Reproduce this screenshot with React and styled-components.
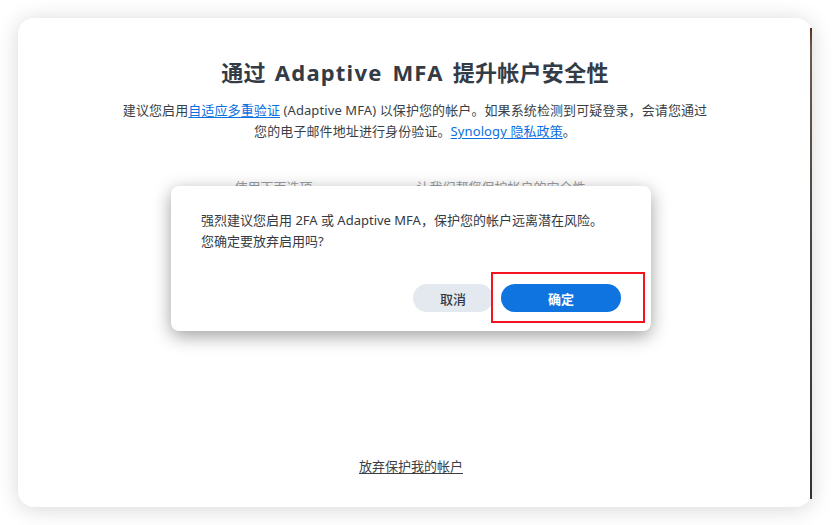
import React from 'react';
import styled, { createGlobalStyle } from 'styled-components';

const GlobalStyle = createGlobalStyle`
    html, body {
        margin: 0;
        padding: 0;
        background: #ffffff;
    }
    body {
        font-family: "Noto Sans", "Noto Sans CJK SC", sans-serif;
        color: #333a44;
    }
`

const Page = styled.div`
    width: 832px;
    height: 525px;
    padding: 18px 20px 18px 18px;
    box-sizing: border-box;
`

const Window = styled.div`
    position: relative;
    height: 489px;
    background: #ffffff;
    border-radius: 16px;
    box-shadow: 0 2px 22px rgba(0, 0, 0, 0.16);
    display: flex;
    flex-direction: column;
    align-items: center;
    padding-top: 39px;
    box-sizing: border-box;
    /* sliver of the desktop behind the window, right edge */
    &::after {
        content: '';
        position: absolute;
        right: 0;
        top: 10px;
        bottom: 8px;
        width: 2px;
        background: linear-gradient(#5a2a1c 0%, #6e5a4e 4%, #4a4844 40%, #2f3236 100%);
    }
`

const Title = styled.h1`
    margin: 0;
    font-size: 22px;
    line-height: 30px;
    font-weight: 700;
    letter-spacing: 0.3px;
    word-spacing: 3px;
    color: #333b45;
`

const Latin = styled.span`
    letter-spacing: 1.2px;
`

const Desc = styled.p`
    margin: 13px 0 0;
    font-size: 13px;
    line-height: 21px;
    letter-spacing: 0.1px;
    text-align: center;
    color: #3a3f47;
`

const Link = styled.a`
    color: #0a6fe0;
    text-decoration: underline;
    text-underline-offset: 2px;
`

const Hint = styled.p`
    margin: 35px 0 0 -10px;
    font-size: 13px;
    line-height: 21px;
    color: #9a9ea4;
    white-space: pre;
`

const Spacer = styled.div`
    flex: 1;
`

const GiveUp = styled.a`
    margin: 0 8px 30px 0;
    font-size: 13px;
    line-height: 21px;
    color: #3a3f47;
    text-decoration: underline;
    text-underline-offset: 2px;
`

const Dialog = styled.div`
    position: absolute;
    left: 153px;
    top: 168px;
    width: 480px;
    height: 145px;
    box-sizing: border-box;
    background: #ffffff;
    border-radius: 8px;
    box-shadow: 0 5px 18px rgba(0, 0, 0, 0.38);
    padding: 24px 30px 19px 30px;
    display: flex;
    flex-direction: column;
`

const DialogText = styled.p`
    margin: 0;
    font-size: 13px;
    line-height: 21px;
    color: #343a42;
`

const Actions = styled.div`
    margin-top: auto;
    display: flex;
    justify-content: flex-end;
    gap: 8px;
    position: relative;
`

const Button = styled.button`
    height: 28px;
    width: ${props => props.w}px;
    border: none;
    border-radius: 14px;
    font-family: "Noto Sans", "Noto Sans CJK SC", sans-serif;
    font-size: 13px;
    font-weight: ${props => props.primary ? 700 : 500};
    color: ${props => props.primary ? '#ffffff' : '#333a44'};
    background: ${props => props.primary ? '#0f74e0' : '#e4e9f0'};
    cursor: pointer;
`

const Highlight = styled.div`
    position: absolute;
    right: -24px;
    top: -12px;
    width: 154px;
    height: 51px;
    box-sizing: border-box;
    border: 2px solid #f5141e;
    pointer-events: none;
`

const App = () => {
    return (
        <Page>
            <GlobalStyle />
            <Window>
                <Title>通过 <Latin>Adaptive MFA</Latin> 提升帐户安全性</Title>
                <Desc>
                    建议您启用<Link>自适应多重验证</Link> (Adaptive MFA) 以保护您的帐户。如果系统检测到可疑登录，会请您通过<br />
                    您的电子邮件地址进行身份验证。<Link>Synology 隐私政策</Link>。
                </Desc>
                <Hint>{'使用下面选项　　　　　　　　让我们帮您保护帐户的安全性'}</Hint>
                <Spacer />
                <GiveUp>放弃保护我的帐户</GiveUp>

                <Dialog>
                    <DialogText>
                        强烈建议您启用 2FA 或 Adaptive MFA，保护您的帐户远离潜在风险。<br />
                        您确定要放弃启用吗?
                    </DialogText>
                    <Actions>
                        <Button w={80}>取消</Button>
                        <Button w={120} primary>确定</Button>
                        <Highlight />
                    </Actions>
                </Dialog>
            </Window>
        </Page>
    );
}

export default App;
